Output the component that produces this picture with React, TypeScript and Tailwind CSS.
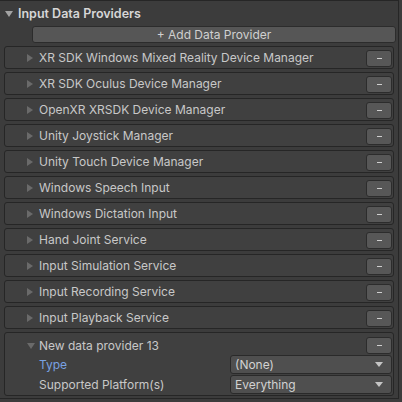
import React from "react";

const rows = [
  "XR SDK Windows Mixed Reality Device Manager",
  "XR SDK Oculus Device Manager",
  "OpenXR XRSDK Device Manager",
  "Unity Joystick Manager",
  "Unity Touch Device Manager",
  "Windows Speech Input",
  "Windows Dictation Input",
  "Hand Joint Service",
  "Input Simulation Service",
  "Input Recording Service",
  "Input Playback Service",
];

function RightTri() {
  return (
    <svg width="6" height="8" viewBox="0 0 6 8" className="shrink-0">
      <path d="M0 0 L6 4 L0 8 Z" fill="#6a6a6a" />
    </svg>
  );
}

function DownTri({ color = "#6a6a6a", w = 8, h = 6 }: { color?: string; w?: number; h?: number }) {
  return (
    <svg width={w} height={h} viewBox={`0 0 ${w} ${h}`} className="shrink-0">
      <path d={`M0 0 L${w} 0 L${w / 2} ${h} Z`} fill={color} />
    </svg>
  );
}

function Minus() {
  return (
    <div className="w-[26px] h-[17px] rounded-[3px] bg-[#575757] border border-[#2c2c2c] flex items-center justify-center shrink-0">
      <div className="w-[5px] h-[1.5px] bg-[#cfcfcf]" />
    </div>
  );
}

function Dropdown({ text }: { text: string }) {
  return (
    <div className="w-[162px] h-[19px] rounded-[3px] bg-[#4f4f4f] border border-[#2a2a2a] flex items-center pl-[4px] pr-[8px] justify-between">
      <span className="text-[12px] text-[#d2d2d2] leading-none">{text}</span>
      <DownTri color="#c4c4c4" w={8} h={5} />
    </div>
  );
}

export default function App() {
  return (
    <div
      className="w-[402px] h-[402px] bg-[#3c3c3c] overflow-hidden"
      style={{ fontFamily: "Inter, 'Noto Sans', sans-serif" }}
    >
      <div className="w-[399px] h-[399px] border-t border-r border-b border-[#262626] flex flex-col">
        <div className="h-[25px] flex items-center pl-[5px] gap-[5px] pt-[1px]">
          <DownTri color="#a3a3a3" w={8} h={6} />
          <span className="text-[12.5px] font-semibold text-[#d6d6d6] leading-none">Input Data Providers</span>
        </div>
        <div className="ml-[32px] mr-[2px] h-[17px] rounded-[3px] bg-[#565656] border border-[#2c2c2c] flex items-center justify-center">
          <span className="text-[12px] text-[#d0d0d0] leading-none">+ Add Data Provider</span>
        </div>
        <div className="flex flex-col gap-[3px] mt-[3px] ml-[4px] mr-[4px]">
          {rows.map((r) => (
            <div
              key={r}
              className="h-[23px] rounded-[3px] bg-[#404040] border border-[#262626] flex items-center pl-[22px] pr-[1px]"
            >
              <RightTri />
              <span className="ml-[6px] text-[12px] text-[#c8c8c8] leading-none flex-1">{r}</span>
              <div className="pt-[2px]">
                <Minus />
              </div>
            </div>
          ))}
          <div className="h-[64px] rounded-[3px] bg-[#404040] border border-[#262626] flex flex-col pt-[4px] pl-[22px] pr-[1px]">
            <div className="flex items-center h-[17px]">
              <DownTri color="#6a6a6a" w={8} h={6} />
              <span className="ml-[4px] text-[12px] text-[#c8c8c8] leading-none flex-1">New data provider 13</span>
              <Minus />
            </div>
            <div className="flex items-center mt-[1px] pl-[12px] h-[19px]">
              <span className="text-[12px] text-[#79a2e2] leading-none flex-1">Type</span>
              <Dropdown text="(None)" />
            </div>
            <div className="flex items-center mt-[1px] pl-[12px] h-[19px]">
              <span className="text-[12px] text-[#c8c8c8] leading-none flex-1">Supported Platform(s)</span>
              <Dropdown text="Everything" />
            </div>
          </div>
        </div>
      </div>
    </div>
  );
}
